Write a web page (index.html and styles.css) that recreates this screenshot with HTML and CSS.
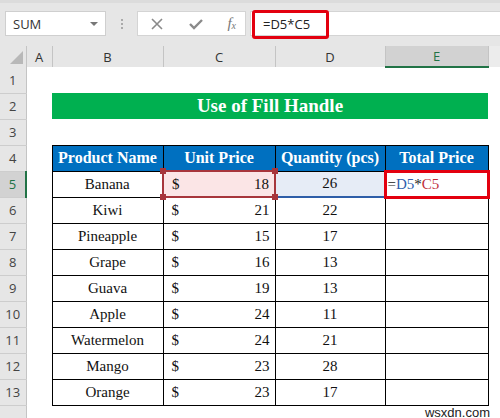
FILE: index.html
```html
<!DOCTYPE html>
<html>
<head>
<meta charset="utf-8">
<link rel="stylesheet" href="styles.css">
</head>
<body>
<div class="app">
  <div class="toolbar">
    <div class="namebox"><span>SUM</span><span class="caret"></span></div>
    <div class="dots"><i></i><i></i><i></i></div>
    <div class="fxbox">
      <svg width="14" height="14" viewBox="0 0 14 14"><path d="M2 2 L12 12 M12 2 L2 12" stroke="#8a8a8a" stroke-width="1.6" fill="none"/></svg>
      <svg width="16" height="14" viewBox="0 0 16 14"><path d="M2 7 L6 11 L14 3" stroke="#8a8a8a" stroke-width="2.4" fill="none"/></svg>
      <span class="fx">f<sub>x</sub></span>
    </div>
    <div class="formula"><span class="fhl">=D5*C5</span></div>
  </div>
  <table class="grid">
    <colgroup>
      <col class="w-rh"><col class="w-a"><col class="w-b"><col class="w-c"><col class="w-d"><col class="w-e"><col class="w-x">
    </colgroup>
    <tr class="hdr">
      <th class="corner"><span class="tri"></span></th><th>A</th><th>B</th><th>C</th><th>D</th><th class="sel">E</th><th class="blank"></th>
    </tr>
    <tr><th class="rh">1</th><td></td><td></td><td></td><td></td><td></td><td></td></tr>
    <tr><th class="rh">2</th><td></td><td colspan="4" class="title">Use of Fill Handle</td><td></td></tr>
    <tr><th class="rh">3</th><td></td><td></td><td></td><td></td><td></td><td></td></tr>
    <tr><th class="rh">4</th><td></td><td class="th">Product Name</td><td class="th">Unit Price</td><td class="th">Quantity (pcs)</td><td class="th">Total Price</td><td></td></tr>
    <tr><th class="rh rsel">5</th><td></td><td class="c">Banana</td><td class="m pink"><div class="money"><span>$</span><span>18</span></div><i class="h h1"></i><i class="h h2"></i><i class="h h3"></i><i class="h h4"></i></td><td class="c blue">26</td><td class="active"><span class="fb">=</span><span class="fblue">D5</span>*<span class="fred">C5</span></td><td></td></tr>
    <tr><th class="rh">6</th><td></td><td class="c">Kiwi</td><td class="m"><div class="money"><span>$</span><span>21</span></div></td><td class="c">22</td><td class="d"></td><td></td></tr>
    <tr><th class="rh">7</th><td></td><td class="c">Pineapple</td><td class="m"><div class="money"><span>$</span><span>15</span></div></td><td class="c">17</td><td class="d"></td><td></td></tr>
    <tr><th class="rh">8</th><td></td><td class="c">Grape</td><td class="m"><div class="money"><span>$</span><span>16</span></div></td><td class="c">13</td><td class="d"></td><td></td></tr>
    <tr><th class="rh">9</th><td></td><td class="c">Guava</td><td class="m"><div class="money"><span>$</span><span>19</span></div></td><td class="c">13</td><td class="d"></td><td></td></tr>
    <tr><th class="rh">10</th><td></td><td class="c">Apple</td><td class="m"><div class="money"><span>$</span><span>24</span></div></td><td class="c">11</td><td class="d"></td><td></td></tr>
    <tr><th class="rh">11</th><td></td><td class="c">Watermelon</td><td class="m"><div class="money"><span>$</span><span>24</span></div></td><td class="c">21</td><td class="d"></td><td></td></tr>
    <tr><th class="rh">12</th><td></td><td class="c">Mango</td><td class="m"><div class="money"><span>$</span><span>23</span></div></td><td class="c">28</td><td class="d"></td><td></td></tr>
    <tr><th class="rh">13</th><td></td><td class="c">Orange</td><td class="m"><div class="money"><span>$</span><span>23</span></div></td><td class="c">17</td><td class="d"></td><td></td></tr>
    <tr class="last"><th class="rh"></th><td></td><td></td><td></td><td></td><td class="wm" colspan="2"><span>wsxdn.com</span></td></tr>
  </table>
</div>
</body>
</html>
```
FILE: styles.css
```css
* { box-sizing: border-box; }
html, body { margin: 0; padding: 0; }
body { width: 500px; height: 418px; overflow: hidden; background: #fff; font-family: "Liberation Serif", "DejaVu Serif", serif; }
.app { width: 500px; height: 418px; overflow: hidden; }

.toolbar {
  height: 46px;
  background: #e6e6e6;
  border-top: 3px solid #dcdcdc;
  display: flex;
  align-items: flex-start;
  padding-top: 8px;
  padding-left: 5px;
}
.namebox {
  width: 101px; height: 25px;
  background: #fff;
  border: 1px solid #cfcfcf;
  display: flex; align-items: center; justify-content: space-between;
  padding: 0 7px 0 7px;
  font-family: "Open Sans", "Liberation Sans", sans-serif;
  font-size: 13px; color: #333;
}
.caret { width: 0; height: 0; border-left: 4px solid transparent; border-right: 4px solid transparent; border-top: 4px solid #777; }
.dots { width: 31px; height: 25px; display: flex; flex-direction: column; align-items: center; justify-content: center; gap: 2px; }
.dots i { display: block; width: 2px; height: 2px; background: #aaa; }
.fxbox {
  width: 109px; height: 25px; background: #fff; border: 1px solid #d4d4d4;
  display: flex; align-items: center; justify-content: space-between;
  padding: 0 9px 0 12px;
}
.fx { font-family: "Liberation Serif", serif; font-style: italic; font-size: 15px; color: #777; line-height: 1; }
.fx sub { font-size: 10px; vertical-align: -1px; }
.formula {
  flex: 1; height: 25px; margin-left: 4px; background: #fff; border: 1px solid #d4d4d4; border-right: none;
  position: relative;
}
.fhl {
  position: absolute; left: 1px; top: -2px; width: 77px; height: 29px;
  border: 3px solid #e3000f; border-radius: 3px;
  font-family: "Open Sans", "Liberation Sans", sans-serif; font-size: 13px; color: #222;
  padding-left: 8px; line-height: 23px;
}

.grid { border-collapse: collapse; table-layout: fixed; width: 500px; }
.w-rh { width: 26px; } .w-a { width: 26px; } .w-b { width: 111px; } .w-c { width: 112px; } .w-d { width: 110px; } .w-e { width: 103px; } .w-x { width: 12px; }
.grid th { padding: 0; height: 26px; font-weight: normal; }
.grid td { padding: 0; height: 26px; font-family: "Liberation Serif", "DejaVu Serif", serif; font-size: 15px; color: #111; }
.hdr th {
  height: 21px; background: #e6e6e6; border-left: 1px solid #c4c4c4;
  font-family: "Open Sans", "Liberation Sans", sans-serif; font-size: 13px; color: #333;
  text-align: center; vertical-align: middle;
}
.hdr th.corner { border-left: none; border-right: 1px solid #c4c4c4; position: relative; }
.tri { position: absolute; right: 3px; bottom: 3px; width: 0; height: 0; border-left: 13px solid transparent; border-bottom: 13px solid #b8b8b8; }
.hdr th.sel { background: #d2d2d2; border-bottom: 2px solid #217346; color: #217346; }
.hdr th.blank { background: #ececec; }
.grid th.rh {
  background: #e6e6e6; border-right: 1px solid #c4c4c4; border-bottom: 1px solid #cdcdcd;
  font-family: "Open Sans", "Liberation Sans", sans-serif; font-size: 13px; color: #444; text-align: center;
}
.grid th.rsel { background: #d2d2d2; border-right: 2px solid #217346; color: #217346; }
.grid .last td, .grid .last th { height: 14px; }

.grid td.title { background: #00b050; color: #fff; font-weight: bold; font-size: 19px; text-align: center; }
.grid td.th { background: #0070c0; color: #fff; font-weight: bold; font-size: 16px; text-align: center; border: 1px solid #000; }
.c, .m, .d { border: 1px solid #000; }
.grid td.c { text-align: center; }
.money { display: flex; justify-content: space-between; padding: 0 5px 0 8px; }
.grid td.pink { background: #fbe5e6; position: relative; border: 2px solid #a7363c; }
.grid td.blue { background: #e6ecf6; border-bottom: 2px solid #2e5ea8; }
.h { position: absolute; width: 6px; height: 6px; background: #a7363c; }
.h1 { left: -4px; top: -4px; } .h2 { right: -4px; top: -4px; } .h3 { left: -4px; bottom: -4px; } .h4 { right: -4px; bottom: -4px; }
.grid td.active { border: 3px solid #e3000f; padding-left: 1px; color: #222; }
.fblue { color: #2f5fae; }
.fred { color: #c0303a; }
.grid td.wm { text-align: right; vertical-align: top; padding-right: 10px; font-family: "Liberation Sans", Arial, sans-serif; font-size: 13px; color: #222; line-height: 13px; }
```
